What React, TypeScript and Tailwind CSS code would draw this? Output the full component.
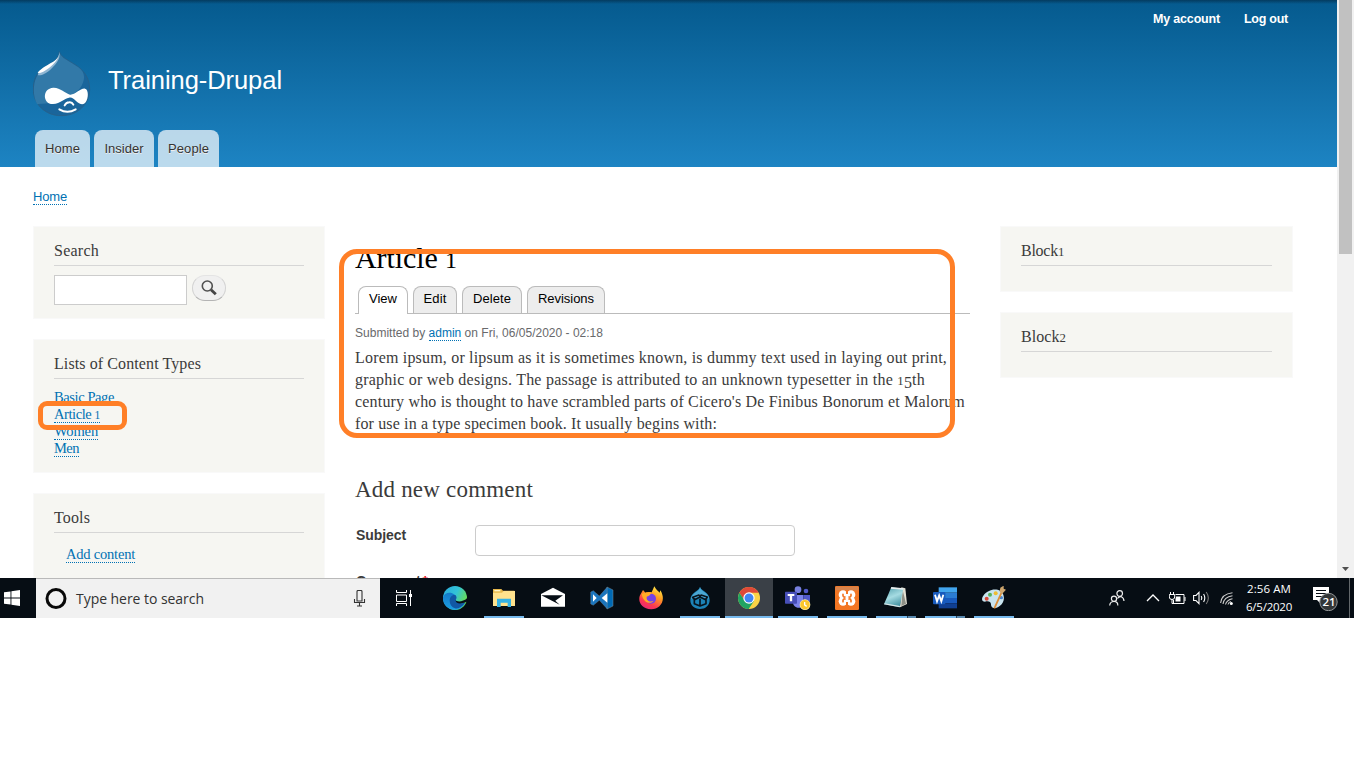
import { useLayoutEffect, useRef, useState } from "react";
import type { ReactNode } from "react";

const SERIF = "font-['Liberation_Serif',serif]";

/** Text run that spreads its letters so that it takes up a given width. */
function Fit({ w, className = "", children }: { w: number; className?: string; children: ReactNode }) {
  const ref = useRef<HTMLSpanElement>(null);
  const [gap, setGap] = useState(0);
  useLayoutEffect(() => {
    const el = ref.current;
    if (!el) return;
    const n = (el.textContent || "").length;
    setGap((w - el.getBoundingClientRect().width) / n);
  }, [w]);
  return (
    <span ref={ref} className={"whitespace-nowrap " + className} style={{ letterSpacing: gap + "px" }}>
      {children}
    </span>
  );
}

/** Old-style figure of x-height. */
const Fig = ({ children, low = false }: { children: ReactNode; low?: boolean }) => (
  <span className={low ? "relative top-[3px]" : "text-[0.8em]"}>{children}</span>
);

const link = "border-b border-dotted border-[#0071b3] text-[#0071b3]";

function Logo() {
  return (
    <svg className="h-[66px] w-[58px]" viewBox="24 18 174 198">
      <path d="M103 20C108 38 130 45 155 62C180 80 194 102 194 133C194 178 157 212 109 212C60 212 25 177 25 131C25 100 38 80 60 66C82 52 102 45 103 20Z" fill="#1a659b" stroke="#27618b" strokeWidth="3" />
      <path d="M103 22C108 40 135 50 160 67C182 82 182 105 165 130C150 148 105 178 36 177C20 148 22 90 60 66C82 53 101 44 103 22Z" fill="#3279a8" />
      <path d="M103 20C108 42 92 58 76 74C62 86 46 94 38 90C45 76 62 63 82 54C96 46 103 37 103 20Z" fill="#8fb6d3" />
      <path d="M103 20C104 38 92 52 72 69C58 80 44 87 38 84C44 73 63 63 82 52C93 45 103 37 103 20Z" fill="#fff" />
      <path d="M85 128C105 127 121 145 135 149C149 151 166 129 180 131C191 133 191 159 182 172C174 183 162 176 153 168C145 160 140 156 132 158C117 160 107 176 84 177C53 178 50 130 85 128Z" fill="#fff" />
      <path d="M119 181Q123 173 133 172Q141 171 145 179M103 193Q127 208 152 193" fill="none" stroke="#fff" strokeWidth="6" strokeLinecap="round" />
    </svg>
  );
}

function Header() {
  return (
    <header className="h-[167px] bg-linear-to-b from-[#055a8e] to-[#1d84c3] font-['Liberation_Sans',sans-serif]">
      <div className="h-1 bg-linear-to-b from-[#043c60] to-transparent" />
      <div className="flex h-[47px] justify-end gap-6 pt-[7px] pr-[49px] text-[12.5px] leading-[17px] font-bold text-white">
        <Fit w={67}>My account</Fit>
        <Fit w={44}>Log out</Fit>
      </div>
      <div className="flex h-[79px] pl-[33px]">
        <Logo />
        <div className="pt-[12px] pl-[17px] text-[25.5px] leading-[34px] text-white">
          <Fit w={174}>Training-Drupal</Fit>
        </div>
      </div>
      <nav className="flex h-[37px] gap-1 pl-[35px] text-[13px] text-[#333] [text-shadow:0_1px_#eee]">
        <span className="flex w-[55px] justify-center rounded-t-lg bg-white/70 pt-[9px] leading-[19px]"><Fit w={35}>Home</Fit></span>
        <span className="flex w-[60px] justify-center rounded-t-lg bg-white/70 pt-[9px] leading-[19px]"><Fit w={39}>Insider</Fit></span>
        <span className="flex w-[61px] justify-center rounded-t-lg bg-white/70 pt-[9px] leading-[19px]"><Fit w={41}>People</Fit></span>
      </nav>
    </header>
  );
}

function Block({ title, w, className, children }: { title: ReactNode; w: number; className: string; children?: ReactNode }) {
  return (
    <section className={"border border-[#f9f9f9] bg-[#f6f6f2] px-5 pt-[14px] " + className}>
      <h2 className={"h-[25px] border-b border-[#d6d6d6] text-[16px] leading-[19px] text-[#3b3b3b] " + SERIF}>
        <Fit w={w}>{title}</Fit>
      </h2>
      {children}
    </section>
  );
}

function LeftColumn() {
  return (
    <aside className="flex w-[292px] flex-col gap-5">
      <Block title="Search" w={45} className="h-[93px] shrink-0">
        <div className="flex gap-[5px] pt-[9px]">
          <div className="h-[30px] w-[133px] border border-[#ccc] bg-white" />
          <div className="flex h-[26px] w-[34px] items-center justify-center rounded-full border border-[#d2d2d2] border-t-[#e4e4e4] border-b-[#b4b4b4] bg-[#f0f0f0]">
            <svg className="h-4 w-4" viewBox="0 0 16 16">
              <circle cx="6.3" cy="6" r="5" fill="none" stroke="#505050" strokeWidth="1.6" />
              <path d="M10 9.7L14.8 14.3" stroke="#454545" strokeWidth="2.8" />
            </svg>
          </div>
        </div>
      </Block>
      <Block title="Lists of Content Types" w={147} className="h-[134px] shrink-0">
        <ul className={"pt-[10px] text-[14.5px] leading-[17px] " + SERIF}>
          <li className="h-[17px]"><Fit w={60} className={link}>Basic Page</Fit></li>
          <li className="h-[17px]"><Fit w={46} className={link}>Article <Fig>1</Fig></Fit></li>
          <li className="h-[17px]"><Fit w={44} className={link}>Women</Fit></li>
          <li className="h-[17px]"><Fit w={25} className={link}>Men</Fit></li>
        </ul>
      </Block>
      <Block title="Tools" w={36} className="h-[133px] shrink-0">
        <div className={"pt-[13px] pl-[12px] text-[14.5px] leading-[17px] " + SERIF}>
          <Fit w={69} className={link}>Add content</Fit>
        </div>
      </Block>
    </aside>
  );
}

function MainColumn() {
  const tab = "h-[27px] rounded-t-lg border border-b-0 border-[#bbb] bg-[#ededed] flex justify-center pt-[3px]";
  return (
    <main className="ml-[30px] w-[615px] text-[#3b3b3b]">
      <h1 className={"h-[60px] pt-[14px] text-[30px] leading-[36px] text-black " + SERIF}>
        <Fit w={102}>Article <Fig>1</Fig></Fit>
      </h1>
      <div className="flex h-[28px] gap-[5px] border-b border-[#bbb] pl-[3px] font-['Liberation_Sans',sans-serif] text-[13px] leading-[18px] text-black">
        <span className="flex h-[28px] w-[50px] justify-center rounded-t-lg border border-b-0 border-[#bbb] bg-white pt-[3px]"><Fit w={28}>View</Fit></span>
        <span className={tab + " w-[44px]"}><Fit w={23}>Edit</Fit></span>
        <span className={tab + " w-[60px]"}><Fit w={38}>Delete</Fit></span>
        <span className={tab + " w-[78px]"}><Fit w={56}>Revisions</Fit></span>
      </div>
      <div className="h-[33px] pt-[11px] font-['Liberation_Sans',sans-serif] text-[12px] leading-[16px] text-[#68696b]">
        <Fit w={248}>Submitted by <span className={link}>admin</span> on Fri, 06/05/2020 - 02:18</Fit>
      </div>
      <div className={"text-[16px] leading-[22px] " + SERIF}>
        <div className="h-[22px]"><Fit w={592}>Lorem ipsum, or lipsum as it is sometimes known, is dummy text used in laying out print,</Fit></div>
        <div className="h-[22px]"><Fit w={570}>graphic or web designs. The passage is attributed to an unknown typesetter in the <Fig>1</Fig><Fig low>5</Fig>th</Fit></div>
        <div className="h-[22px]"><Fit w={610}>century who is thought to have scrambled parts of Cicero's De Finibus Bonorum et Malorum</Fit></div>
        <div className="h-[22px]"><Fit w={362}>for use in a type specimen book. It usually begins with:</Fit></div>
      </div>
      <h2 className={"h-[90px] pt-[41px] text-[23px] leading-[28px] " + SERIF}>
        <Fit w={178}>Add new comment</Fit>
      </h2>
      <div className="flex h-[48px] pl-px font-['Liberation_Sans',sans-serif] text-[14px] leading-[20px] font-bold">
        <span className="w-[119px]"><Fit w={50}>Subject</Fit></span>
        <div className="h-[31px] w-[320px] rounded border border-[#ccc] bg-white" />
      </div>
      <div className="pl-px font-['Liberation_Sans',sans-serif] text-[14px] leading-[16px] font-bold">
        Comment <span className="-ml-0.5 text-red-600">*</span>
      </div>
    </main>
  );
}

const ic = "h-6 w-6";

const Edge = () => (
  <svg className={ic} viewBox="0 0 72 72">
    <defs>
      <linearGradient id="e1" x1="0" y1="0" x2="1" y2="0.5"><stop offset="0" stopColor="#2aa9dc" /><stop offset=".55" stopColor="#32c4d8" /><stop offset="1" stopColor="#68dc55" /></linearGradient>
      <linearGradient id="e2" x1="0" y1="0" x2="0" y2="1"><stop offset="0" stopColor="#1479c8" /><stop offset="1" stopColor="#1b9de2" /></linearGradient>
    </defs>
    <circle cx="36" cy="36" r="36" fill="url(#e1)" />
    <path d="M0 34C3 20 21 16 32 24C40 29 41 34 38 42C38 52 56 54 67 50C58 67 43 73 30 71C12 67-1 54 0 34Z" fill="url(#e2)" />
    <path d="M20 44C20 33 27 25 37 27C42 31 41 38 38 42C39 53 58 54 66 49C59 63 44 70 36 67C26 63 20 55 20 44Z" fill="#1258a4" />
    <path d="M38 42C36 55 57 54 67 49L75 46L73 36C62 48 41 49 38 42Z" fill="#070e16" />
  </svg>
);
const Explorer = () => (
  <svg className={ic} viewBox="0 0 72 72">
    <path d="M3 9H28L33 14H67V59H3Z" fill="#e6b84c" />
    <path d="M3 20H30L35 15H69V60H3Z" fill="#ffe28d" />
    <path d="M7 12H25V16H7Z" fill="#fff5c8" />
    <path d="M15 63V38H57V63H47V50H26V63Z" fill="#35b2e5" />
  </svg>
);
const Mail = () => (
  <svg className={ic} viewBox="0 0 72 72">
    <path d="M0 24L36 5L72 24V62H0Z" fill="#fff" />
    <path d="M3 28H66L43 44L56 56L1 28Z" fill="#070e16" />
  </svg>
);
const VsCode = () => (
  <svg className={ic} viewBox="0 0 72 72">
    <path d="M51 3L69 12V60L51 69Z" fill="#0069b4" stroke="#7b8d99" strokeWidth="1.5" />
    <path d="M2 18L10 14L28 30L51 4V68L28 43L10 58L2 54Z" fill="#1b75bd" stroke="#7b8d99" strokeWidth="1" />
    <path d="M9 25V47L20 36ZM52 22V50L35 36Z" fill="#fff" />
  </svg>
);
const Firefox = () => (
  <svg className={ic} viewBox="0 0 72 72">
    <defs><linearGradient id="ff" x1=".8" y1="0" x2=".25" y2="1"><stop offset="0" stopColor="#fff04b" /><stop offset=".38" stopColor="#ff9c21" /><stop offset=".75" stopColor="#fb3752" /><stop offset="1" stopColor="#e52878" /></linearGradient></defs>
    <path d="M3 28L12 12L20 21C25 17 33 18 38 19L46 1C51 12 58 15 62 20L64 13C84 45 61 71 36 70C9 69-5 47 3 28Z" fill="url(#ff)" />
    <circle cx="36" cy="38" r="15" fill="#7542e5" />
    <path d="M8 23L23 19L38 21L30 29L23 32C21 46 35 49 44 44C31 59 11 46 8 23Z" fill="#ffac26" />
  </svg>
);
const DrupalCube = () => (
  <svg className={ic} viewBox="0 0 72 72">
    <path d="M36 2C37 14 65 17 65 42C65 59 52 69 36 69C19 69 7 58 7 42C7 18 35 15 36 2Z" fill="#1c82b6" />
    <path d="M36 3C38 17 62 20 63 38C45 33 24 33 9 39C12 18 35 18 36 3Z" fill="#4ba7d3" />
    <path d="M36 38V60L19 53V37M36 60L54 53V37M14 34L33 27L36 33L20 41ZM36 33L39 27L58 33L53 41Z" fill="none" stroke="#07131d" strokeWidth="5" strokeLinejoin="round" />
  </svg>
);
const Chrome = () => (
  <svg className={ic} viewBox="0 0 72 72">
    <circle cx="36" cy="36" r="33" fill="#fbd346" />
    <path d="M7 20A33 33 0 0 1 65 20H36L23 44Z" fill="#df4938" />
    <path d="M7 20A33 33 0 0 0 35 69L51 45L24 45Z" fill="#20a463" />
    <circle cx="36" cy="36" r="17" fill="#fff" /><circle cx="36" cy="36" r="13.5" fill="#4285f4" />
  </svg>
);
const Teams = () => (
  <svg className="h-6 w-[26px]" viewBox="-3 0 78 72">
    <circle cx="36" cy="11" r="10" fill="#7780df" /><circle cx="60" cy="15" r="7" fill="#5059c9" />
    <path d="M20 27H52V47C52 60 46 65 38 65C28 65 20 58 20 44Z" fill="#7b83eb" />
    <path d="M52 27H72V43C72 55 60 60 52 55Z" fill="#5059c9" />
    <rect x="-3" y="17" width="36" height="36" rx="2" fill="#464eb8" />
    <path d="M5 24H25V30H18.500V46H11.500V30H5Z" fill="#fff" />
    <circle cx="57" cy="56" r="16" fill="#fff0a0" /><circle cx="57" cy="56" r="14" fill="#fbc62b" />
    <path d="M56 48V57L62 61" fill="none" stroke="#fff" strokeWidth="4" />
  </svg>
);
const Xampp = () => (
  <svg className={ic} viewBox="0 0 72 72">
    <rect width="72" height="72" rx="4" fill="#f37623" /><path d="M2 2H70V13H2Z" fill="#d6834c" />
    <g fill="#fff">
      <circle cx="24" cy="26" r="13" /><circle cx="48" cy="26" r="13" /><circle cx="24" cy="46" r="13" /><circle cx="48" cy="46" r="13" />
      <path d="M24 24H48V48H24Z" />
    </g>
    <g fill="none" stroke="#f37623" strokeWidth="5" strokeLinecap="round">
      <path d="M24 25V29Q25 34 30 33M48 25V29Q47 34 42 33M24 47V43Q25 38 30 39M48 47V43Q47 38 42 39" />
    </g>
    <path d="M33 12H39V24H33ZM33 48H39V60H33Z" fill="#f37623" />
  </svg>
);
const Notepad = () => (
  <svg className={ic} viewBox="0 0 72 72">
    <defs><linearGradient id="np" x1=".3" y1="0" x2=".7" y2="1"><stop offset="0" stopColor="#5fa9b5" /><stop offset=".45" stopColor="#a5dbe2" /><stop offset="1" stopColor="#388a9b" /></linearGradient></defs>
    <path d="M52 4L64 7L69 54L48 64Z" fill="#e3e1d5" /><path d="M56 12L52 60L66 53Z" fill="#8e9087" />
    <path d="M22 4L58 8L47 64L0 55Z" fill="url(#np)" /><path d="M22 3L59 7L57 11L20 8Z" fill="#e9eeee" />
    <path d="M0 55L47 64L48 60L2 52Z" fill="#d9e6e8" />
  </svg>
);
const Word = () => (
  <svg className={ic} viewBox="0 0 72 72">
    <path d="M17 4H72V20H17Z" fill="#41a5ee" /><path d="M17 20H72V36H17Z" fill="#2b7cd3" /><path d="M17 36H72V52H17Z" fill="#185abd" /><path d="M17 52H72V67H17Z" fill="#103f91" />
    <rect y="18" width="37" height="37" rx="3" fill="#185abd" />
    <path d="M6 26L12 46L18.500 28L25 46L31 26" fill="none" stroke="#fff" strokeWidth="5.500" />
  </svg>
);
const Paint = () => (
  <svg className={ic} viewBox="0 0 72 72">
    <path d="M5 28C15 14 38 5 55 15C70 25 69 48 54 59C42 70 28 68 27 57C28 47 19 44 9 47C-2 47-2 37 5 28Z" fill="#c9e4ef" />
    <circle cx="14" cy="38" r="6" fill="#da4938" /><circle cx="24" cy="26" r="6" fill="#54b15e" /><circle cx="41" cy="22" r="6" fill="#eebd32" /><circle cx="58" cy="35" r="5" fill="#4784cf" />
    <path d="M60 17L37 67" stroke="#dc8e39" strokeWidth="5.500" /><path d="M55 5L65-1L65 8L72 11L60 24L53 17Z" fill="#cda56d" />
  </svg>
);

function TaskButton({ children, run = false, active = false, stacked = false }: { children: ReactNode; run?: boolean; active?: boolean; stacked?: boolean }) {
  return (
    <div className={"mr-px flex h-10 w-12 flex-col items-center " + (active ? "bg-[#3a4047]" : "")}>
      <div className="flex h-[38px] items-center pt-0.5">{children}</div>
      {run && (
        <div className={"flex h-0.5 " + (active ? "w-12 bg-[#76b9ed]" : "w-10 bg-[#76b9ed]")}>
          {stacked && <div className="ml-auto h-0.5 w-[9px] border-l border-[#2c465c] bg-[#5888af]" />}
        </div>
      )}
    </div>
  );
}

function Taskbar() {
  return (
    <footer className="flex h-10 w-[1354px] bg-[#060d14] font-['Open_Sans',sans-serif] text-white">
      <div className="flex w-9 items-center pl-1">
        <svg className="h-4 w-4" viewBox="0 0 16 16"><path d="M0 2.3L6.5 1.4V7.5H0ZM7.4 1.2L16 0V7.5H7.4ZM0 8.4H6.5V14.6L0 13.7ZM7.4 8.4H16V16L7.4 14.8Z" fill="#fff" /></svg>
      </div>
      <div className="flex w-[344px] items-center border-t border-[#b9b9b9] bg-[#f1f1f1] pl-[9px] text-[#333]">
        <svg className="h-[22px] w-[22px]" viewBox="0 0 22 22"><circle cx="11" cy="10.500" r="9" fill="none" stroke="#080808" strokeWidth="3" /></svg>
        <div className="ml-[9px] w-[277px] text-[14px] leading-5"><Fit w={128}>Type here to search</Fit></div>
        <svg className="h-[17px] w-[13px]" viewBox="0 0 13 17"><path d="M4 1.5Q4 .5 5 .5H8Q9 .5 9 1.5V11H4ZM1.5 9V12.5H11.5V9M6.5 13V16M4 16H9" fill="none" stroke="#333" strokeWidth="1.1" /></svg>
      </div>
      <div className="flex w-[51px] items-center pl-4">
        <svg className="h-4 w-[17px]" viewBox="0 0 17 16"><path d="M.5 0V2.5H10.5V0M.5 5V11.5H10.5V5ZM.5 16V13.5H10.5V16M14.5 0V16" fill="none" stroke="#fff" strokeWidth="1" /><path d="M13 4H16V7H13Z" fill="#fff" /></svg>
      </div>
      <TaskButton><Edge /></TaskButton>
      <TaskButton run><Explorer /></TaskButton>
      <TaskButton><Mail /></TaskButton>
      <TaskButton><VsCode /></TaskButton>
      <TaskButton><Firefox /></TaskButton>
      <TaskButton run><DrupalCube /></TaskButton>
      <TaskButton run active><Chrome /></TaskButton>
      <TaskButton run><Teams /></TaskButton>
      <TaskButton run><Xampp /></TaskButton>
      <TaskButton run stacked><Notepad /></TaskButton>
      <TaskButton run stacked><Word /></TaskButton>
      <TaskButton run><Paint /></TaskButton>
      <div className="ml-auto flex items-center">
        <svg className="h-4 w-4" viewBox="0 0 16 16"><g fill="none" stroke="#eee" strokeWidth="1.2"><circle cx="10.7" cy="3.5" r="2.8" /><circle cx="5" cy="8.8" r="2.6" /><path d="M.7 15.5Q1 11.5 5 11.5T8.8 15.5M8.4 8.5Q10 6.4 12.3 6.7Q14.7 7.5 15 11" /></g></svg>
        <svg className="ml-[21px] h-2 w-[14px]" viewBox="0 0 14 8"><path d="M1 7L7 1L13 7" fill="none" stroke="#fff" strokeWidth="1.3" /></svg>
        <svg className="ml-[9px] h-[13px] w-[17px]" viewBox="0 0 17 13"><g fill="none" stroke="#fff"><path d="M6.500 2.500H15V11.500H4.500V8M16 5V9M1.500 0V3M4.500 0V3M3 7V11.500H5" /></g><path d="M.3 2.500H5.700V5Q5.700 7.500 3 7.500Q.3 7.500 .3 5Z" fill="none" stroke="#fff" /><path d="M7 4.500H11.500V9.500H6.500V7Z" fill="#fff" /></svg>
        <svg className="ml-[7px] h-[14px] w-[17px]" viewBox="0 0 17 14"><path d="M.6 4.500H3L6 1.400V12.600L3 9.500H.6ZM8.200 5Q9.500 7 8.200 9M10.600 3Q13 7 10.600 11" fill="none" stroke="#fff" strokeWidth="1.1" /><path d="M13.200 1Q17.500 7 13.200 13" fill="none" stroke="#777" strokeWidth="1.1" /></svg>
        <svg className="ml-[10px] h-[13px] w-[13px]" viewBox="0 0 13 13"><g fill="none" stroke="#ccc" strokeWidth="1.1"><path d="M.6 11Q1.500 2 12.500 .8M3 12Q4 5 12.500 3.800M5.500 12.500Q6.500 8 12.500 6.800M8 12.500Q8.500 10 11 9.500" /></g><circle cx="11.300" cy="11.500" r="1.500" fill="#fff" /></svg>
        <div className="ml-[12px] flex w-[48px] flex-col items-center text-[11.5px] leading-[18px]">
          <Fit w={44}>2:56 AM</Fit>
          <Fit w={46}>6/5/2020</Fit>
        </div>
        <div className="relative ml-5 h-[26px] w-[26px]">
          <svg className="h-[26px] w-[26px]" viewBox="0 0 26 26">
            <path d="M0 2H16V15H7V18L4 15H0Z" fill="#fff" /><path d="M3 5.500H13M3 8.500H13M3 11.500H10" stroke="#060d14" />
            <circle cx="15.500" cy="17" r="8.700" fill="#333739" stroke="#929597" />
          </svg>
          <span className="absolute top-[9px] left-[8px] w-4 text-center text-[11.5px] leading-4 font-semibold">21</span>
        </div>
        <div className="mr-1 ml-[10px] h-10 w-px bg-[#62676b]" />
      </div>
    </footer>
  );
}

export default function App() {
  return (
    <div className="relative h-[768px] w-[1366px] overflow-hidden bg-white">
      <div className="flex h-[578px] w-[1354px] overflow-hidden">
        <div className="h-[578px] w-[1337px] overflow-hidden">
          <Header />
          <div className="h-[59px] pt-[21px] pl-[33px] font-['Liberation_Sans',sans-serif] text-[13px] leading-[17px]">
            <Fit w={34} className={link}>Home</Fit>
          </div>
          <div className="flex pl-[33px]">
            <LeftColumn />
            <MainColumn />
            <aside className="ml-[30px] flex w-[293px] flex-col gap-5">
              <Block title={<>Block<Fig>1</Fig></>} w={43} className="h-[66px]" />
              <Block title={<>Block<Fig>2</Fig></>} w={45} className="h-[66px]" />
            </aside>
          </div>
        </div>
        <div className="flex h-[578px] w-[17px] flex-col items-center justify-between bg-[#f1f1f1] pb-[7px]">
          <div className="h-[254px] w-[13px] bg-[#c1c1c1]" />
          <svg className="h-1 w-[7px]" viewBox="0 0 7 4"><path d="M0 0H7L3.5 4Z" fill="#505050" /></svg>
        </div>
      </div>
      <Taskbar />
      <div className="absolute top-[249px] left-[339px] h-[189px] w-[616px] rounded-[18px] border-[5px] border-[#ff7f27]" />
      <div className="absolute top-[401px] left-[38px] h-[29px] w-[89px] rounded-[9px] border-[5px] border-[#ff7f27]" />
    </div>
  );
}
